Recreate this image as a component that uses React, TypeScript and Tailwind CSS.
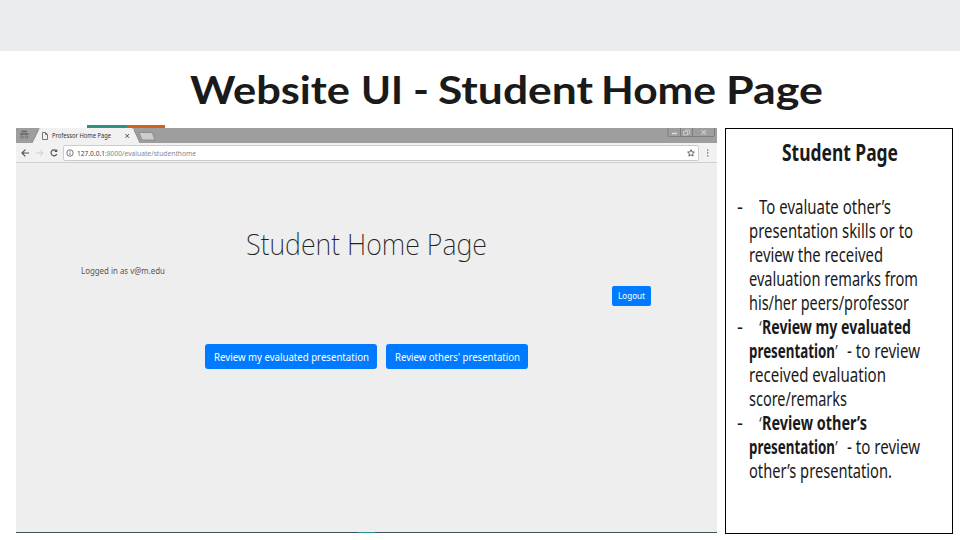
import { useLayoutEffect, useRef, useState, type ReactNode } from "react";

// Text run condensed or expanded horizontally to an exact width.
function Fit({ w, className = "", children }: { w: number; className?: string; children: ReactNode }) {
  const ref = useRef<HTMLSpanElement>(null);
  const [scale, setScale] = useState(1);
  useLayoutEffect(() => {
    const measure = () => {
      if (ref.current && ref.current.offsetWidth) {
        const style = getComputedStyle(ref.current);
        setScale(w / parseFloat(style.width));
      }
    };
    measure();
    document.fonts?.ready.then(measure);
  }, [w]);
  return (
    <span className="block shrink-0" style={{ width: w }}>
      <span
        ref={ref}
        className={`inline-block origin-left whitespace-pre align-top ${className}`}
        style={{ transform: `scaleX(${scale})` }}
      >
        {children}
      </span>
    </span>
  );
}

type Line = { dash?: boolean; parts: { text: string; w: number; bold?: boolean }[] };

const lines: Line[] = [
  { dash: true, parts: [{ text: "To evaluate other’s", w: 132 }] },
  { parts: [{ text: "presentation skills or to", w: 164 }] },
  { parts: [{ text: "review the received", w: 134 }] },
  { parts: [{ text: "evaluation remarks from", w: 169 }] },
  { parts: [{ text: "his/her peers/professor", w: 160 }] },
  { dash: true, parts: [{ text: "‘", w: 3 }, { text: "Review my evaluated", w: 149, bold: true }] },
  { parts: [{ text: "presentation", w: 86, bold: true }, { text: "’", w: 12 }, { text: "- to review", w: 73 }] },
  { parts: [{ text: "received evaluation", w: 137 }] },
  { parts: [{ text: "score/remarks", w: 98 }] },
  { dash: true, parts: [{ text: "‘", w: 3 }, { text: "Review other’s", w: 105, bold: true }] },
  { parts: [{ text: "presentation", w: 86, bold: true }, { text: "’", w: 12 }, { text: "- to review", w: 73 }] },
  { parts: [{ text: "other’s presentation.", w: 143 }] },
];

function Notes() {
  return (
    <aside className="ml-2 h-[406px] w-[228px] border border-black bg-white text-[#1a1a1a]">
      <h2 className="ml-[56px] mt-[7px] h-[32px] text-[23px] leading-[32px]">
        <Fit w={116} className="font-bold">Student Page</Fit>
      </h2>
      <div className="mt-[27px] text-[19px] leading-[24px]">
        {lines.map((line, i) => (
          <div key={i} className={`flex h-6 ${line.dash ? "pl-[11px]" : "pl-[23px]"}`}>
            {line.dash && (
              <span className="w-[22px] shrink-0">
                <Fit w={6}>-</Fit>
              </span>
            )}
            {line.parts.map((p, j) =>
              p.text === "’" || p.text === "‘" ? (
                <span key={j} className={p.text === "’" ? "w-[12px] font-light" : "w-[3px] font-light"}>{p.text}</span>
              ) : (
                <Fit key={j} w={p.w} className={p.bold ? "font-bold" : ""}>{p.text}</Fit>
              ),
            )}
          </div>
        ))}
      </div>
    </aside>
  );
}

function TabStrip() {
  return (
    <svg className="block h-[15px] w-[701px]" viewBox="0 0 701 15" fill="none">
      <rect width="701" height="15" fill="#9e9e9e" />
      <path d="M16 15L22.500 2Q23.500 0 25 0H115Q117 0 118 2L124 15Z" fill="#f1f1f1" />
      <path d="M16 15L22.500 2M118 2L124 15" stroke="#777" strokeWidth=".7" />
      <path d="M123 4.500H134.500Q136 4.500 136.700 6L139 12H127.500Q126 12 125.500 10.500Z" fill="#cdcdcd" stroke="#858585" strokeWidth=".8" />
      <path d="M5.500 3.500H11M4 6H12.500" stroke="#666" strokeWidth="1.500" />
      <circle cx="6" cy="9" r="1.300" stroke="#6c6c6c" strokeWidth=".8" />
      <circle cx="10.500" cy="9" r="1.300" stroke="#6c6c6c" strokeWidth=".8" />
      <path d="M26.500 4.500H29.500L31.500 6.500V11.500H26.500ZM29.500 4.500V6.500H31.500" stroke="#666" strokeWidth=".9" />
      <path d="M109.500 6L113 9.800M113 6L109.500 9.800" stroke="#555" />
      <path d="M652 0V7Q652 8.500 653.500 8.500H697Q698.500 8.500 698.500 7V0M664.500 0V8.500M676.500 0V8.500" stroke="#777" strokeWidth=".8" />
      <path d="M656 5.500H661" stroke="#ddd" strokeWidth="1.500" />
      <path d="M667.500 3.500H671.500V7H667.500ZM669.500 3V2H673.500V5.500H672" stroke="#d4d4d4" strokeWidth=".8" />
      <path d="M685.500 2.200L690 6.500M690 2.200L685.500 6.500" stroke="#ccc" strokeWidth="1.100" />
    </svg>
  );
}

function Browser() {
  return (
    <section className="ml-4 h-[405px] w-[701px] bg-[#eee]">
      <div className="grid h-[15px]">
        <div className="col-start-1 row-start-1"><TabStrip /></div>
        <div className="col-start-1 row-start-1 pl-[36px] pt-[1px] text-[7px] leading-[14px] text-[#333]">
          <Fit w={59}>Professor Home Page</Fit>
        </div>
      </div>
      <div className="flex h-5 items-center border-b border-[#cfcfcf] bg-[#f1f1f1]">
        <svg className="h-[19px] w-[47px]" viewBox="0 0 47 19" fill="none">
          <path d="M13 10H6M9.300 6.700L6 10L9.300 13.300" stroke="#555" strokeWidth="1.200" />
          <path d="M20.500 10H27M24 7L27 10L24 13" stroke="#ccc" />
          <path d="M40.300 7.800A3 3 0 1 0 40.800 11" stroke="#555" strokeWidth="1.200" />
          <path d="M41.300 6V9.100H38.200Z" fill="#555" />
        </svg>
        <div className="flex h-4 w-[636px] items-center rounded-[2px] border border-[#ccc] bg-white">
          <svg className="ml-[2px] h-2 w-2 shrink-0" viewBox="0 0 8 8" fill="none" stroke="#555" strokeWidth=".8">
            <circle cx="4" cy="4" r="3.200" />
            <path d="M4 3.600V6M4 2V2.800" />
          </svg>
          <div className="ml-[3px] flex text-[7.500px] leading-[14px] text-[#444]">
            <Fit w={28}>127.0.0.1</Fit>
            <Fit w={91} className="text-[#888]">:8000/evaluate/studenthome</Fit>
          </div>
          <svg className="ml-auto mr-[3px] h-2 w-2" viewBox="0 0 8 8" fill="none" stroke="#555" strokeWidth=".9">
            <path d="M4 .7L4.950 2.900L7.400 3.100L5.550 4.700L6.100 7.100L4 5.850L1.900 7.100L2.450 4.700L.600 3.100L3.050 2.900Z" />
          </svg>
        </div>
        <svg className="ml-[7px] h-2 w-[3px]" viewBox="0 0 3 8" fill="#666">
          <rect x="1" y="0.500" width="1.300" height="1.300" />
          <rect x="1" y="3.300" width="1.300" height="1.300" />
          <rect x="1" y="6.100" width="1.300" height="1.300" />
        </svg>
      </div>
      <h2 className="ml-[230px] mt-[60px] h-[42px] text-[29px] leading-[42px] text-[#222]">
        <Fit w={241} className="font-extralight">Student Home Page</Fit>
      </h2>
      <p className="ml-[65px] mt-0 h-3 text-[8px] leading-3 text-[#555]">
        <Fit w={84}>Logged in as v@m.edu</Fit>
      </p>
      <button className="ml-[596px] mt-[9px] flex h-5 w-[39px] items-center justify-center rounded-[2px] bg-[#007bff] text-[8px] leading-5 text-white">
        <Fit w={27}>Logout</Fit>
      </button>
      <div className="ml-[189px] mt-[38px] flex gap-[9px] text-[10.500px] leading-[25px] text-white">
        <button className="flex h-[25px] w-[172px] items-center justify-center rounded-[3px] bg-[#007bff] pt-[2px]">
          <Fit w={155}>Review my evaluated presentation</Fit>
        </button>
        <button className="flex h-[25px] w-[142px] items-center justify-center rounded-[3px] bg-[#007bff] pt-[2px]">
          <Fit w={125}>Review others' presentation</Fit>
        </button>
      </div>
      <div className="mt-[163px] flex h-px justify-center bg-[#3d4e55]">
        <div className="h-px w-[17px] bg-[#288f8d]" />
      </div>
    </section>
  );
}

export default function App() {
  return (
    <main className="h-[540px] w-[960px] overflow-hidden bg-white font-['Noto_Sans','Open_Sans',sans-serif]">
      <div className="h-[51px] bg-[#e8ecec]" />
      <h1 className="ml-[190px] mt-[12px] flex h-[52px] font-['Lato',sans-serif] text-[39px] leading-[52px] font-bold text-[#1a1a1a]">
        <span className="w-[171px]"><Fit w={160}>Website</Fit></span>
        <span className="w-[52px]"><Fit w={42}>UI</Fit></span>
        <span className="w-[25px]"><Fit w={16}>-</Fit></span>
        <span className="w-[163px]"><Fit w={155}>Student</Fit></span>
        <span className="w-[125px]"><Fit w={115}>Home</Fit></span>
        <Fit w={97}>Page</Fit>
      </h1>
      <div className="ml-[87px] mt-[10px] flex h-[3px]">
        <div className="w-[40px] bg-[#2d9183]" />
        <div className="w-[38px] bg-[#d2611f]" />
      </div>
      <div className="flex">
        <Browser />
        <Notes />
      </div>
    </main>
  );
}
